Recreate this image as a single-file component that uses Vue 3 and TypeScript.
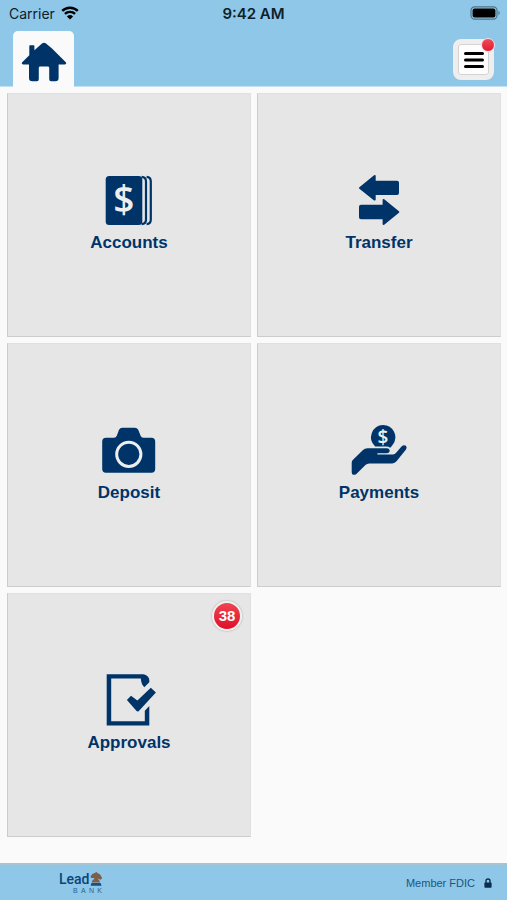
<script setup lang="ts">
interface Tile {
  id: string
  label: string
  count?: number
}

const tiles: Tile[] = [
  { id: 'accounts', label: 'Accounts' },
  { id: 'transfer', label: 'Transfer' },
  { id: 'deposit', label: 'Deposit' },
  { id: 'payments', label: 'Payments' },
  { id: 'approvals', label: 'Approvals', count: 38 },
]
const wordmark: string[] = ['B', 'A', 'N', 'K']
</script>

<template>
  <div class="page">
    <header class="top">
      <div class="status">
        <div class="carrier">
          <span>Carrier</span>
          <svg class="wifi" viewBox="0 0 18 14" aria-hidden="true">
            <path d="M1.2 4.9A11.2 11.2 0 0 1 16.8 4.9" />
            <path d="M3.9 7.9A7.4 7.4 0 0 1 14.1 7.9" />
            <path class="solid" d="M5.9 10.4A4.5 4.5 0 0 1 12.1 10.4L9 13.6Z" />
          </svg>
        </div>
        <div class="time">9:42 AM</div>
        <svg class="battery" viewBox="0 0 32 14" aria-hidden="true">
          <rect x="1" y="0.8" width="26" height="12.4" rx="3.6" fill="none" stroke="#4f7488" stroke-width="1.2" />
          <rect x="2.6" y="2.4" width="22.8" height="9.2" rx="2" fill="#000" />
          <path d="M28.5 4.8Q31 7 28.5 9.2Z" fill="#4f7488" />
        </svg>
      </div>
      <nav class="nav">
        <a class="home" href="#home" aria-label="Home">
          <svg viewBox="0 0 46 40" aria-hidden="true">
            <path d="M21 1.4Q23 0 25 1.4L31 6.6L44.8 20.3Q46 22.3 43.5 22.6H37.6V36Q37.6 39.3 34.4 39.3H30.2Q28.2 39.3 28.2 37V25.8Q28.2 24.4 26.8 24.4H19.2Q17.8 24.4 17.8 25.8V37Q17.8 39.3 15.8 39.3H11.2Q8 39.3 8 36V22.6H2.4Q0 22.3 1.2 20.3L8.3 13.2V4Q8.3 3.3 9 3.3H12.6Q13.4 3.3 13.4 4V8.2Z" />
          </svg>
        </a>
        <button class="menu" type="button" aria-label="Menu">
          <svg viewBox="0 0 22 18" aria-hidden="true">
            <path d="M2.5 2.5H19.5M2.5 9H19.5M2.5 15.5H19.5" />
          </svg>
          <span class="dot"></span>
        </button>
      </nav>
    </header>

    <main class="grid">
      <a v-for="tile in tiles" :key="tile.id" class="tile" :href="'#' + tile.id">
        <svg v-if="tile.id === 'accounts'" class="icon" viewBox="0 0 60 54" aria-hidden="true">
          <rect x="6.7" y="3" width="36.6" height="49" rx="3.5" />
          <path class="line" d="M42.6 3.8Q47 4 47 8.5V46.5Q47 51 42.6 51.2M47.6 3.8Q51.8 4 51.8 8.5V46.5Q51.8 51 47.6 51.2" />
          <text class="cash" x="24.8" y="40">$</text>
        </svg>
        <svg v-else-if="tile.id === 'transfer'" class="icon" viewBox="0 0 60 54" aria-hidden="true">
          <path class="round" d="M11 15L25.7 3V8.7H48Q49 8.7 49 9.7V20Q49 21 48 21H25.7V26.6Z" />
          <path class="round" d="M49.3 39L34.6 27V32.7H12Q11 32.7 11 33.7V44.3Q11 45.3 12 45.3H34.6V50.9Z" />
        </svg>
        <svg v-else-if="tile.id === 'deposit'" class="icon" viewBox="0 0 60 54" aria-hidden="true">
          <path d="M7 14.7H15Q17 14.7 17.8 12.7L20 6.8Q21 4.7 23.4 4.7H35.8Q38.2 4.7 39.2 6.8L41.6 12.7Q42.4 14.7 44.4 14.7H52.4Q56.2 14.7 56.2 18.5V46Q56.2 49.7 52.4 49.7H7Q3.2 49.7 3.2 46V18.5Q3.2 14.7 7 14.7Z" />
          <circle class="lens" cx="29.8" cy="31.3" r="12.1" />
        </svg>
        <svg v-else-if="tile.id === 'payments'" class="icon" viewBox="0 0 60 54" aria-hidden="true">
          <path d="M34 1.9A12.3 12.3 0 0 1 43.7 21.8Q42.8 23.2 41.2 24.8Q39.5 23.4 37.5 23.4H26.2A12.3 12.3 0 0 1 34 1.9Z" />
          <path d="M2.7 49.5V39.8Q2.7 38 4 36.8L14 27Q15.8 25.2 18.3 25.2H37.8Q40.7 25.5 40.7 28Q40.7 30 38 30.2H28.4V31.5H44Q45.8 31.2 46.9 30L52.5 23.4Q54.8 21.2 56.9 22.8Q58.4 24.3 57 26.6L47.5 38.3Q45.8 40.4 43.3 40.4H20.2Q18 40.4 16.4 42L7.4 51.1Q6.7 51.8 5.8 51.8H4.6Q2.7 51.8 2.7 49.5Z" />
          <text class="coin" x="34" y="20.5">$</text>
        </svg>
        <svg v-else class="icon" viewBox="0 0 60 54" aria-hidden="true">
          <path d="M7.7 1.2H44.5Q47 1.4 48.8 3.4Q50.3 5 50.3 7V9.3L45.3 14.2Q42.2 11.4 41.8 5.5H12.2V48.2H45.8V37.7L50.3 33V52.4H7.7Z" />
          <path d="M27.9 27L32 22.8L38.4 27.4L51.8 14.7L56.9 19.4L39.4 38.6L37.8 38.2Z" />
        </svg>
        <span class="label">{{ tile.label }}</span>
        <span v-if="tile.count" class="badge">{{ tile.count }}</span>
      </a>
    </main>

    <footer class="foot">
      <div class="brand">
        <div class="brand-top">
          <span class="lead">Lead</span>
          <svg class="knight" viewBox="0 0 14 16" aria-hidden="true">
            <path d="M2 12Q1.5 10 5 7.6L4.2 6.8L1.6 7Q.2 6 1 4.4Q2 2.1 4.5 1.5L7.5.2L8.5 1.6Q11.2 2 12.2 4.4L13.6 7L11.8 8.7L8.4 7.3Q10.8 8.8 11.3 12Z" fill="#7b6049" />
            <path d="M1.7 12.5H11.8L13 15.5H.7Z" fill="#174e83" />
          </svg>
        </div>
        <div class="bank"><span v-for="letter in wordmark" :key="letter">{{ letter }}</span></div>
      </div>
      <div class="member">
        <span>Member FDIC</span>
        <svg class="lock" viewBox="0 0 8 10" aria-hidden="true">
          <path d="M2 5V3Q2 1 4 1Q6 1 6 3V5" fill="none" stroke="#092f50" stroke-width="1.4" />
          <rect x=".4" y="4.4" width="7.2" height="5.4" rx=".8" fill="#092f50" />
        </svg>
      </div>
    </footer>
  </div>
</template>

<style>
body {
  margin: 0;
  background: #fafafa;
}
</style>

<style scoped>
.page {
  display: flex;
  flex-direction: column;
  min-height: 100vh;
  background: #fafafa;
  color: #003468;
  font-family: "Liberation Sans", Arial, sans-serif;
}
.top {
  background: #8ec7e8;
  border-bottom: 1px solid #c5e1f1;
}
.status {
  display: grid;
  grid-template-columns: 1fr auto 1fr;
  align-items: center;
  height: 26px;
  padding: 0 5px;
  color: #10202a;
  font-family: Inter, sans-serif;
  font-size: 14px;
}
.carrier {
  display: flex;
  align-items: center;
  gap: 6px;
  padding: 0 4px;
}
.wifi {
  width: 18px;
  height: 14px;
  fill: none;
  stroke: #000;
  stroke-width: 2.4;
}
.wifi .solid {
  fill: #000;
  stroke: none;
}
.time {
  font-size: 15px;
  font-weight: 600;
}
.battery {
  justify-self: end;
  width: 32px;
  height: 14px;
}
.nav {
  display: flex;
  justify-content: space-between;
  align-items: flex-start;
  padding: 5px 13px 0;
}
.home {
  display: flex;
  justify-content: center;
  box-sizing: border-box;
  width: 61px;
  height: 56px;
  margin-bottom: -1px;
  padding-top: 11px;
  border-radius: 5px 5px 0 0;
  background: #fafafa;
}
.home svg {
  width: 46px;
  height: 40px;
  fill: #003468;
}
.menu {
  position: relative;
  display: flex;
  align-items: center;
  justify-content: center;
  width: 41px;
  height: 41px;
  margin-top: 8px;
  padding: 0;
  border: 5px solid #eeeeee;
  border-radius: 8px;
  background: #fdfdfd;
  box-shadow: inset 0 0 0 1px #d3d3d3, 0 0 1px #a8b8c0;
}
.menu svg {
  flex: none;
  width: 22px;
  height: 18px;
  stroke: #000;
  stroke-width: 3;
  stroke-linecap: round;
}
.dot {
  position: absolute;
  top: -6px;
  right: -6px;
  width: 12px;
  height: 12px;
  border: 1px solid #f3dfe3;
  border-radius: 50%;
  background: linear-gradient(#f14a58, #e11b30);
}
.grid {
  display: grid;
  grid-template-columns: 1fr 1fr;
  gap: 6px;
  flex: 1;
  align-content: start;
  padding: 6px 6px 24px 7px;
}
.tile {
  position: relative;
  display: flex;
  flex-direction: column;
  align-items: center;
  justify-content: center;
  gap: 6px;
  box-sizing: border-box;
  aspect-ratio: 1;
  padding-bottom: 4px;
  border: 1px solid #e0e0e0;
  border-bottom-color: #cccccc;
  border-left-color: #cccccc;
  background: #e6e6e6;
  color: #003468;
  text-decoration: none;
}
.icon {
  width: 60px;
  height: 54px;
  fill: #003468;
}
.line {
  fill: none;
  stroke: #003468;
  stroke-width: 2.2;
}
.round {
  stroke: #003468;
  stroke-width: 2;
  stroke-linejoin: round;
}
.lens {
  fill: none;
  stroke: #eeeeee;
  stroke-width: 3;
}
.cash,
.coin {
  fill: #eeeeee;
  font-family: "Open Sans", sans-serif;
  font-size: 37px;
  font-weight: 600;
  text-anchor: middle;
}
.coin {
  font-size: 19px;
}
.label {
  font-size: 17px;
  font-weight: 700;
  line-height: 20px;
}
.badge {
  position: absolute;
  top: 7px;
  right: 8px;
  width: 26px;
  height: 26px;
  border: 2px solid #f0f0f0;
  border-radius: 50%;
  background: linear-gradient(#f04453, #df1029);
  box-shadow: 0 0 2px #999999;
  color: #ffffff;
  font-size: 15px;
  font-weight: 700;
  line-height: 26px;
  text-align: center;
}
.foot {
  display: flex;
  align-items: center;
  justify-content: space-between;
  box-sizing: border-box;
  height: 37px;
  padding: 0 15px 0 59px;
  border-top: 2px solid #a6c4d4;
  background: #8ec7e8;
}
.brand {
  width: 43px;
}
.brand-top {
  display: flex;
  align-items: flex-start;
}
.lead {
  color: #0b4377;
  font-family: Roboto, sans-serif;
  font-size: 14px;
  font-weight: 500;
  line-height: 16px;
}
.knight {
  width: 14px;
  height: 16px;
}
.bank {
  display: flex;
  justify-content: space-between;
  margin-left: 14px;
  color: #2d618c;
  font-size: 7px;
  line-height: 8px;
}
.member {
  display: flex;
  align-items: center;
  gap: 9px;
  color: #1d557f;
  font-size: 11px;
}
.lock {
  width: 8px;
  height: 10px;
}
</style>
